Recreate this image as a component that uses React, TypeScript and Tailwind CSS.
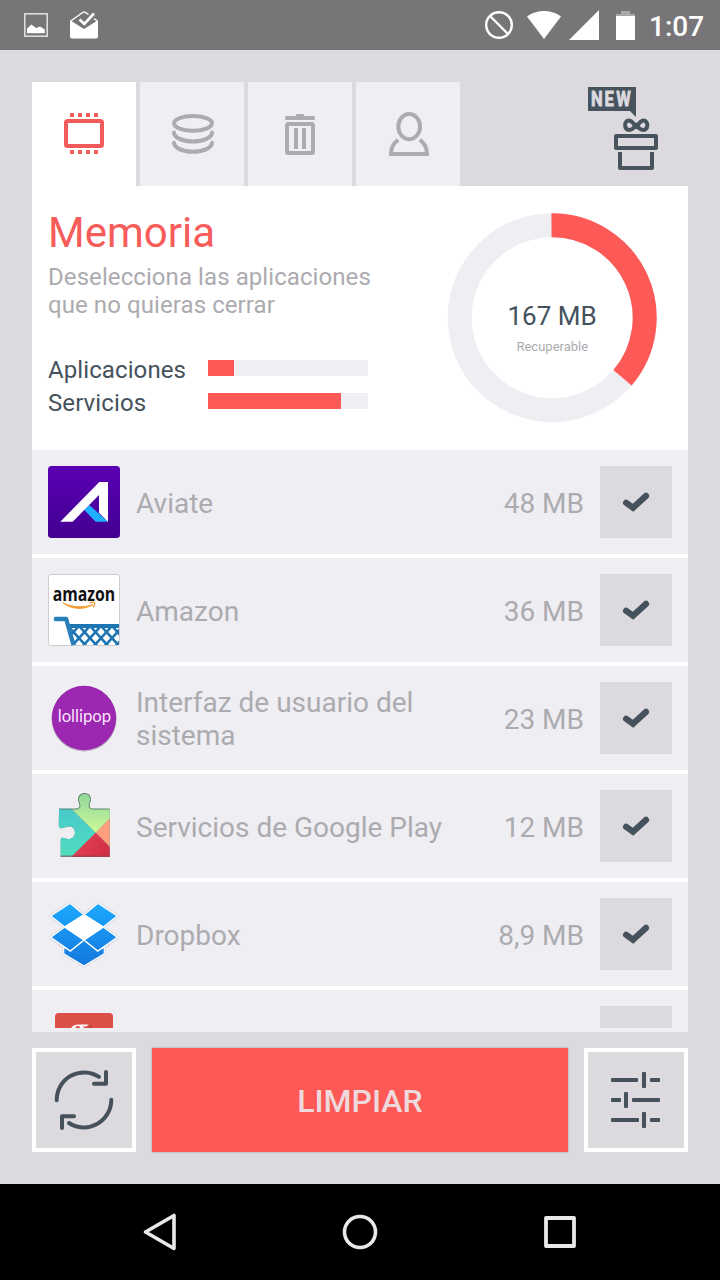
import type { ReactNode } from "react";

const tabs: { id: string; icon: ReactNode }[] = [
  { id: "memory", icon: <ChipIcon /> },
  { id: "storage", icon: <StackIcon /> },
  { id: "trash", icon: <TrashIcon /> },
  { id: "privacy", icon: <PersonIcon /> },
];

const usage = [
  { label: "Aplicaciones", value: 26 },
  { label: "Servicios", value: 133 },
];

const apps: { name: string; size: string; icon: ReactNode }[] = [
  { name: "Aviate", size: "48 MB", icon: <AviateLogo /> },
  { name: "Amazon", size: "36 MB", icon: <AmazonLogo /> },
  { name: "Interfaz de usuario del sistema", size: "23 MB", icon: <LollipopLogo /> },
  { name: "Servicios de Google Play", size: "12 MB", icon: <PlayServicesLogo /> },
  { name: "Dropbox", size: "8,9 MB", icon: <DropboxLogo /> },
  { name: "", size: "", icon: <GooglePlusLogo /> },
];

function ChipIcon() {
  return (
    <svg viewBox="0 0 104 104" className="size-[104px]" fill="#f15b59">
      <rect x="34" y="39" width="36" height="25" rx="1.5" fill="none" stroke="#f15b59" strokeWidth="4" />
      {[38, 46, 54, 62].map((x) => (
        <g key={x}>
          <rect x={x} y="31" width="4" height="4" rx="0.5" />
          <rect x={x} y="68" width="4" height="4" rx="0.5" />
        </g>
      ))}
    </svg>
  );
}

function StackIcon() {
  return (
    <svg viewBox="0 0 104 104" className="size-[104px]" fill="none" stroke="#acabaf" strokeWidth="4" strokeLinecap="round">
      <ellipse cx="53" cy="41.3" rx="19" ry="7.4" />
      <path d="M34 50.5A19 9 0 0 0 72 50.5M34 60.8A19 9 0 0 0 72 60.8" />
    </svg>
  );
}

function TrashIcon() {
  return (
    <svg viewBox="0 0 104 104" className="size-[104px]" fill="#acabaf">
      <rect x="37" y="34" width="30" height="4" rx="1.5" />
      <rect x="48" y="32" width="8" height="4" rx="1" />
      <rect x="39" y="42" width="26" height="29" rx="1.5" fill="none" stroke="#acabaf" strokeWidth="4" />
      <rect x="46" y="46" width="4" height="21" />
      <rect x="54" y="46" width="4" height="21" />
    </svg>
  );
}

function PersonIcon() {
  return (
    <svg viewBox="0 0 104 104" className="size-[104px]" fill="none" stroke="#acabaf" strokeWidth="4">
      <ellipse cx="53.2" cy="44.6" rx="10.9" ry="12.6" />
      <path d="M42.2 57.8C37.5 61 35 66.5 35 72H71C71 66.5 68.5 61 63.8 57.8" />
    </svg>
  );
}

function GiftIcon() {
  return (
    <svg viewBox="0 0 104 104" className="size-[104px]" fill="none" stroke="#47535d" strokeWidth="4" strokeLinejoin="round">
      <path d="M4 5H52V35L46 29H4Z" fill="#47535d" stroke="none" />
      <text
        x="8.2 24 38"
        y="24"
        transform="scale(0.85 1)"
        fill="#dcdade"
        stroke="#dcdade"
        strokeWidth="0.8"
        className="font-[Roboto,sans-serif] text-[19.5px] font-bold"
      >
        NEW
      </text>
      <path d="M52.2 46C49.5 41 47.5 38.6 44.8 38.6C39.8 38.6 39.8 48 45 48C48 48 50.2 46 52.2 42.5C54.2 46 56.4 48 59.4 48C64.6 48 64.6 38.6 59.6 38.6C56.9 38.6 54.9 41 52.2 46" />
      <rect x="32" y="54" width="40" height="12" />
      <path d="M36 70V86H68V70" />
    </svg>
  );
}

function CheckIcon() {
  return (
    <svg viewBox="0 0 72 72" className="size-[72px]" fill="none" stroke="#45525c" strokeWidth="6.2" strokeLinecap="round">
      <path d="M26.1 36.8L33 41.8L46 29.9" />
    </svg>
  );
}

function AviateLogo() {
  return (
    <svg viewBox="0 0 72 72" className="size-[72px]">
      <defs>
        <linearGradient id="aviate" x1="0" y1="0" x2="0" y2="1">
          <stop offset="0" stopColor="#5a00b4" />
          <stop offset="1" stopColor="#430091" />
        </linearGradient>
      </defs>
      <rect width="72" height="72" rx="3.5" fill="url(#aviate)" />
      <path d="M36.3 44L41.3 39L60 55.7H47.7Z" fill="#1eb0ff" />
      <path d="M12.3 55.7L51.3 16H60V55.7L51 46.7V29L24.7 55.7Z" fill="#fff" />
    </svg>
  );
}

function AmazonLogo() {
  return (
    <svg viewBox="0 0 72 72" className="size-[72px]" fill="none">
      <defs>
        <clipPath id="basket">
          <path d="M20.5 52H71V71H25.5Z" />
        </clipPath>
      </defs>
      <rect x="0.5" y="0.5" width="71" height="71" rx="2" fill="#fff" stroke="#cfcdd2" />
      <text
        x="6"
        y="27"
        transform="scale(0.79 1)"
        fill="#111"
        className="font-['Open_Sans',sans-serif] text-[20px] font-bold"
      >
        amazon
      </text>
      <path d="M14.7 28.8C23 35.5 36 36.5 45 30.5C36 33.8 24 33.5 14.7 28.8Z" fill="#f29a2e" stroke="#f29a2e" strokeWidth="0.8" />
      <path d="M41.5 28.8C44 28 46 28 46.5 28.6C47 29.5 46.4 31.5 45 33.3" stroke="#f29a2e" strokeWidth="1.3" />
      <g clipPath="url(#basket)" stroke="#1d74b3" strokeWidth="2.6">
        {[-1, 0, 1, 2, 3, 4, 5, 6, 7].map((i) => (
          <path key={i} d={`M${9 + i * 11} 52l20 22M${9 + i * 11} 52l-20 22`} />
        ))}
      </g>
      <path d="M20.5 52H71" stroke="#1d74b3" strokeWidth="4" />
      <path d="M7.8 45H18.2L25.5 71" stroke="#2a7fba" strokeWidth="4.4" strokeLinejoin="round" />
      <circle cx="7.8" cy="45" r="2.2" fill="#2a7fba" />
    </svg>
  );
}

function LollipopLogo() {
  return (
    <svg viewBox="0 0 72 72" className="size-[72px]">
      <circle cx="36" cy="37" r="32.5" fill="#b9b4bf" />
      <circle cx="36" cy="36" r="32.2" fill="#9c27b0" />
      <text
        x="9.7"
        y="40.3"
        textLength="53.5"
        lengthAdjust="spacingAndGlyphs"
        fill="#fbe3ff"
        className="font-[Lato,sans-serif] text-[16.5px]"
      >
        lollipop
      </text>
    </svg>
  );
}

function PlayServicesLogo() {
  return (
    <svg viewBox="0 0 72 72" className="size-[72px]">
      <defs>
        <clipPath id="puzzle">
          <path d="M11 18.8H27C30 18.8 32.5 17.5 31.5 14.5C30.8 12.5 30.3 11 30.3 9.5C30.3 5.5 32.5 3.3 36.5 3.3C40.5 3.3 42.7 5.5 42.7 9.5C42.7 11 42.2 12.5 41.5 14.5C40.5 17.5 43 18.8 46 18.8H61.7V66.7H12.7V50C12.7 48 14 47.3 16 48C21 50.5 27 48.5 27 42.5C27 36.5 21 35.5 16.5 37.5C13 39.3 10.8 38 10.8 35Z" />
        </clipPath>
        <linearGradient id="teal" x1="0" y1="0" x2="0" y2="1">
          <stop offset="0" stopColor="#45c3cf" />
          <stop offset="1" stopColor="#52dfbd" />
        </linearGradient>
        <linearGradient id="lime" x1="0" y1="0" x2="0" y2="1">
          <stop offset="0" stopColor="#91d79a" />
          <stop offset="1" stopColor="#cdfa98" />
        </linearGradient>
        <linearGradient id="cherry" x1="0" y1="0" x2="1" y2="0.3">
          <stop offset="0" stopColor="#e8465a" />
          <stop offset="1" stopColor="#cf2c42" />
        </linearGradient>
      </defs>
      <g clipPath="url(#puzzle)">
        <path d="M0 0H72V72H0Z" fill="#5d7a72" />
        <g transform="translate(0 0.8)">
          <path d="M8 3L47.7 41.9L20 69.5H5V3Z" fill="url(#teal)" />
          <path d="M8 3H72V17.5L47.7 41.9Z" fill="url(#lime)" />
          <path d="M72 17.5V66L47.7 41.9Z" fill="#fd9f7c" />
          <path d="M47.7 41.9L20 69.5H75Z" fill="url(#cherry)" />
        </g>
        {/* dark rim along the upper edge of the piece */}
        <path
          d="M11 18.8H27C30 18.8 32.5 17.5 31.5 14.5C30.8 12.5 30.3 11 30.3 9.5C30.3 5.5 32.5 3.3 36.5 3.3C40.5 3.3 42.7 5.5 42.7 9.5C42.7 11 42.2 12.5 41.5 14.5C40.5 17.5 43 18.8 46 18.8H61.7"
          fill="none"
          stroke="#5d7a72"
          strokeWidth="1.4"
        />
        <path d="M12 66.2H62" stroke="#8d3a4a" />
      </g>
    </svg>
  );
}

function DropboxLogo() {
  return (
    <svg viewBox="0 0 72 72" className="size-[72px]" stroke="#fff" strokeWidth="1.3" strokeLinejoin="round">
      <defs>
        <linearGradient id="dropbox" gradientUnits="userSpaceOnUse" x1="0" y1="5" x2="0" y2="68">
          <stop offset="0" stopColor="#1caaff" />
          <stop offset="1" stopColor="#1476dc" />
        </linearGradient>
      </defs>
      <path
        d="M22 5.3L36 16.7L50 5.3L69.3 18L55.3 29L69.3 39.3L56.3 49V55.7L36 68L15.7 55.7V49L2.7 39.3L16.7 29L2.7 18Z"
        fill="#fff"
        stroke="#d5d8e0"
        strokeWidth="3"
      />
      <g fill="url(#dropbox)">
        <path d="M22 5.3L36 16.7L16.7 29L2.7 18Z" />
        <path d="M50 5.3L36 16.7L55.3 29L69.3 18Z" />
        <path d="M15.7 49V55.7L36 68L56.3 55.7V49L49.7 53L36 42L22.3 53Z" />
        <path d="M16.7 29L36 42L22.3 53L2.7 39.3Z" />
        <path d="M55.3 29L36 42L49.7 53L69.3 39.3Z" />
      </g>
      <path d="M16.7 29L36 16.7L55.3 29L36 42Z" fill="#fff" />
    </svg>
  );
}

function GooglePlusLogo() {
  return (
    <svg viewBox="0 0 72 72" className="size-[72px]">
      <rect x="7" y="7" width="58" height="58" rx="3.5" fill="#dd5047" />
      <path d="M41 18L65 42V65H30Z" fill="#c2453c" />
      <path d="M22.5 24C23 20 27 18.5 31 18.5H41L38 20.5H34.5C37 22 37.5 25 37 28H33C33.5 22 32 20 29.5 20C27 20 26.5 24 27 28H22.5Z" fill="#fff" />
    </svg>
  );
}

function RefreshIcon() {
  return (
    <svg viewBox="0 0 96 96" className="size-24" fill="none" stroke="#45525c" strokeWidth="4" strokeLinecap="round" strokeLinejoin="round">
      <path d="M20.7 48.3A27.4 27.6 0 0 1 63 24.9" />
      <path d="M70 20V31.8H58" />
      <path d="M75.3 47.7A27.4 27.6 0 0 1 33 71" />
      <path d="M26 76V64.2H38" />
    </svg>
  );
}

function SlidersIcon() {
  return (
    <svg viewBox="0 0 96 96" className="size-24" fill="#45525c">
      <rect x="23" y="26" width="27" height="4" rx="1" />
      <rect x="54" y="20" width="4" height="16" rx="1" />
      <rect x="62" y="26" width="10" height="4" rx="1" />
      <rect x="23" y="46" width="10" height="4" rx="1" />
      <rect x="36" y="40" width="4" height="16" rx="1" />
      <rect x="44" y="46" width="28" height="4" rx="1" />
      <rect x="23" y="66" width="28" height="4" rx="1" />
      <rect x="54" y="60" width="4" height="16" rx="1" />
      <rect x="62" y="66" width="10" height="4" rx="1" />
    </svg>
  );
}

function StatusBar() {
  return (
    <div className="flex h-[50px] items-center bg-[#777578] pl-6 pr-4 text-white">
      <svg viewBox="0 0 24 24" className="size-6" fill="none">
        <rect x="0.8" y="0.8" width="22.4" height="22.4" stroke="#dddcde" strokeWidth="1.6" />
        <path d="M3 20.3V15.5L7.5 11.5L12 15L16 13.5L20.8 16.5V20.3Z" fill="#fff" />
      </svg>
      <svg viewBox="0 0 28 28" className="ml-[22px] size-7" fill="none">
        <path d="M0.5 10L14 18.5L27.5 10V26Q27.5 27 26.5 27H1.5Q0.5 27 0.5 26Z" fill="#fff" stroke="#fff" />
        <path d="M0.8 10L13 1.2Q14 0.5 15 1.2L18.5 3.5M24 7.5L27.2 10" stroke="#fff" strokeWidth="1.4" />
        <path d="M9.5 8.5L14.3 13L24 2.5" stroke="#fff" strokeWidth="2.6" />
      </svg>
      <div className="ml-auto flex items-center">
        <svg viewBox="0 0 28 28" className="size-7" fill="none" stroke="#fff" strokeWidth="2.4">
          <circle cx="14" cy="14" r="12.8" />
          <path d="M5 5L23 23" />
        </svg>
        <svg viewBox="0 0 34 28" className="ml-3.5 h-7 w-[34px]" fill="#fff">
          <path d="M0 5.5Q7.500 0 17 0T34 5.5L17 28Z" />
        </svg>
        <svg viewBox="0 0 30 30" className="ml-2 size-[30px]" fill="#fff">
          <path d="M30 0V30H0Z" />
        </svg>
        <svg viewBox="0 0 19 29" className="ml-[17px] h-[29px] w-[19px]">
          <path d="M5 0H14V3H19V6H0V3H5Z" fill="#a9a8ab" />
          <rect y="5" width="19" height="24" fill="#fff" />
        </svg>
        <span className="ml-3.5 mt-1 w-[55px] text-[28px] font-medium leading-8">1:07</span>
      </div>
    </div>
  );
}

function MemoryRing() {
  return (
    <svg viewBox="0 0 212 212" className="size-[212px]" fill="none" strokeWidth="24">
      <circle cx="106.2" cy="105.7" r="92.5" stroke="#efeef3" />
      <path d="M105.5 13.2A92.5 92.5 0 0 1 176.500 165.8" stroke="#fd5956" />
      <text x="106" y="112.7" textAnchor="middle" fill="#45525c" className="text-[26px]">
        167 MB
      </text>
      <text x="106.3" y="139" textAnchor="middle" fill="#acabaf" className="text-[13px]">
        Recuperable
      </text>
    </svg>
  );
}

function NavBar() {
  return (
    <nav className="flex h-24 items-center justify-between bg-black px-[136px]">
      <svg viewBox="0 0 48 48" className="size-12" fill="none" stroke="#e9e8eb" strokeWidth="3.6" strokeLinejoin="round">
        <path d="M9.5 24L38 7.5V40.5Z" />
      </svg>
      <svg viewBox="0 0 48 48" className="size-12" fill="none" stroke="#e9e8eb" strokeWidth="3.6">
        <circle cx="24" cy="24" r="15.5" />
      </svg>
      <svg viewBox="0 0 48 48" className="size-12" fill="none" stroke="#e9e8eb" strokeWidth="3.8" strokeLinejoin="round">
        <rect x="10" y="10" width="28" height="28" />
      </svg>
    </nav>
  );
}

export default function App() {
  return (
    <div className="flex h-[1280px] w-[720px] flex-col overflow-hidden bg-[#dcdade] font-[Roboto,sans-serif]">
      <StatusBar />

      <main className="flex flex-1 flex-col px-8 pt-8">
        <div className="flex h-[104px] gap-1">
          {tabs.map((tab, index) => (
            <button key={tab.id} className={index === 0 ? "w-[104px] bg-white" : "w-[104px] bg-[#efeef3]"}>
              {tab.icon}
            </button>
          ))}
          <button className="ml-auto">
            <GiftIcon />
          </button>
        </div>

        <section className="flex h-[264px] justify-between bg-white pl-4 pr-[30px] pt-[26px]">
          <div>
            <h1 className="-mt-1 text-[42px] leading-[50px] text-[#f65c59]">Memoria</h1>
            <p className="mt-[5px] w-[350px] text-[24px] leading-7 tracking-[0.08px] text-[#acabaf]">
              Deselecciona las aplicaciones
              <br />
              que no quieras cerrar
            </p>
            <div className="mt-[34px]">
              {usage.map((item) => (
                <div key={item.label} className="flex h-[33px] items-center">
                  <span className="w-40 pt-0.5 text-[24px] leading-[33px] tracking-[0.1px] text-[#45525c]">{item.label}</span>
                  <div className="mb-1 h-4 w-40 bg-[#efeef3]">
                    <div className="h-4 bg-[#fd5956]" style={{ width: item.value }} />
                  </div>
                </div>
              ))}
            </div>
          </div>
          <MemoryRing />
        </section>

        <section className="h-[582px] bg-[#efeef3] pb-1">
          <ul className="flex h-[578px] flex-col gap-1 overflow-hidden bg-white">
            {apps.map((app) => (
              <li key={app.size} className="flex h-[104px] shrink-0 items-center gap-4 bg-[#efeef3] px-4 text-[28px] leading-[33px] text-[#acabaf]">
                {app.icon}
                <span className="w-[330px] pt-0.5">{app.name}</span>
                <span className="ml-auto whitespace-nowrap pt-0.5">{app.size}</span>
                <span className="bg-[#dcdade]">
                  <CheckIcon />
                </span>
              </li>
            ))}
          </ul>
        </section>

        <div className="mt-4 flex h-[104px] gap-4">
          <button className="w-[104px] border-4 border-white">
            <RefreshIcon />
          </button>
          <button className="flex-1 bg-[#fd5956] pt-0.5 text-[32px] font-medium text-[#eedadd] shadow-[0_0_2px_rgba(0,0,0,0.3)]">
            LIMPIAR
          </button>
          <button className="w-[104px] border-4 border-white">
            <SlidersIcon />
          </button>
        </div>
      </main>

      <NavBar />
    </div>
  );
}
